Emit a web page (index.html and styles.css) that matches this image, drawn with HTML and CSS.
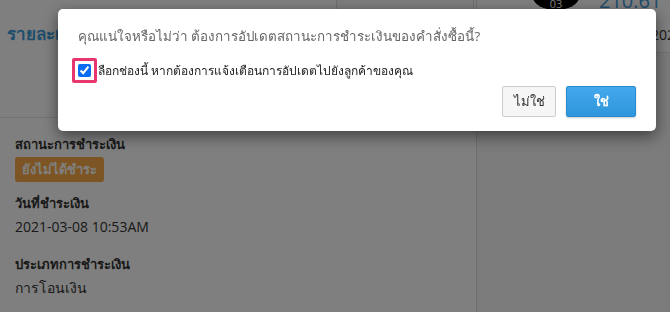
FILE: index.html
```html
<!DOCTYPE html>
<html>

<head>
  <meta charset="UTF-8">
  <title>Payment status</title>
  <link rel="stylesheet" href="styles.css">
</head>

<body>

  <div class="page">
    <div class="main">
      <div class="main-head">
        <h2 class="title">รายละเอียดการชำระเงิน</h2>
        <div class="head-btn"></div>
      </div>
      <div class="details">
        <div class="label">สถานะการชำระเงิน</div>
        <div class="badge">ยังไม่ได้ชำระ</div>
        <div class="label">วันที่ชำระเงิน</div>
        <div class="value">2021-03-08 10:53AM</div>
        <div class="label">ประเภทการชำระเงิน</div>
        <div class="value">การโอนเงิน</div>
      </div>
    </div>
    <div class="side">
      <div class="side-head">
        <div class="side-top">
          <span class="bubble">03</span>
          <span class="amount">210.61</span>
        </div>
        <div class="side-date">2021-03-08</div>
      </div>
    </div>
  </div>

  <div class="backdrop"></div>

  <div class="modal">
    <p class="question">คุณแน่ใจหรือไม่ว่า ต้องการอัปเดตสถานะการชำระเงินของคำสั่งซื้อนี้?</p>
    <label class="notify">
      <span class="check-ring"><input type="checkbox" checked></span>
      <span>ลือกช่องนี้ หากต้องการแจ้งเตือนการอัปเดตไปยังลูกค้าของคุณ</span>
    </label>
    <div class="actions">
      <button class="btn btn-no">ไม่ใช่</button>
      <button class="btn btn-yes">ใช่</button>
    </div>
  </div>

</body>

</html>
```

FILE: styles.css
```css
html,
body {
  margin: 0;
  height: 100%;
  overflow: hidden;
}

body {
  font-family: "Open Sans", "Noto Sans", sans-serif;
  color: #333;
  background: #fff;
}

.page {
  display: flex;
  height: 100%;
}

.main {
  flex: none;
  width: 476px;
  border-right: 1px solid #ddd;
}

.main-head {
  height: 117px;
  border-bottom: 1px solid #e4e4e4;
  position: relative;
}

.title {
  margin: 0;
  padding: 20px 0 0 7px;
  font-size: 17px;
  font-weight: 700;
  color: #3f9bd9;
}

.head-btn {
  position: absolute;
  left: 336px;
  top: -6px;
  width: 136px;
  height: 14px;
  border: 1px solid #ddd;
  border-radius: 4px;
  background: #fafafa;
}

.details {
  padding: 16px 15px 0;
}

.label {
  font-size: 13px;
  font-weight: 700;
  line-height: 20px;
}

.badge {
  width: fit-content;
  margin: 3px 0 11px;
  padding: 0 7px;
  height: 25px;
  line-height: 25px;
  border-radius: 3px;
  font-size: 13px;
  font-weight: 700;
  background: #faab48;
  color: #fff;
}

.value {
  margin: 4px 0 17px;
  font-size: 14px;
  line-height: 20px;
}

.side {
  flex: 1;
  min-width: 0;
  overflow: hidden;
  background: #f6f6f6;
}

.side-head {
  height: 52px;
  background: #fff;
  border-bottom: 1px solid #e4e4e4;
  padding-left: 56px;
}

.side-top {
  display: flex;
  align-items: flex-end;
  height: 10px;
}

.bubble {
  flex: none;
  width: 46px;
  height: 26px;
  margin-top: -16px;
  border-radius: 50%;
  background: #000;
  color: #fff;
  font-size: 11px;
  text-align: center;
  line-height: 40px;
}

.amount {
  margin-left: 20px;
  font-size: 20px;
  line-height: 20px;
  margin-bottom: -1px;
  color: #3f9bd9;
  white-space: nowrap;
}

.side-date {
  margin: 15px 0 0 118px;
  font-size: 14px;
  white-space: nowrap;
  color: #333;
}

.backdrop {
  position: fixed;
  inset: 0;
  background: rgba(0, 0, 0, 0.5);
}

.modal {
  position: fixed;
  left: 58px;
  top: 9px;
  width: 598px;
  height: 122px;
  box-sizing: border-box;
  padding: 17px 20px 0 20px;
  background: #fff;
  border-radius: 5px;
  box-shadow: 0 5px 15px rgba(0, 0, 0, 0.5);
}

.question {
  margin: 0;
  font-size: 13.4px;
  line-height: 20px;
  color: #666;
}

.notify {
  display: flex;
  align-items: center;
  margin: 12px 0 0 -6px;
  font-size: 12px;
  color: #222;
}

.check-ring {
  display: inline-flex;
  padding: 3px;
  border: 3px solid #e8366f;
  border-radius: 2px;
  margin-right: 1px;
}

.check-ring input {
  margin: 0;
  width: 13px;
  height: 13px;
  accent-color: #0a6cf5;
}

.actions {
  display: flex;
  justify-content: flex-end;
  gap: 10px;
  margin-top: 3px;
}

.btn {
  height: 31px;
  border-radius: 2px;
  font-family: inherit;
  font-size: 13px;
  cursor: pointer;
}

.btn-no {
  width: 54px;
  background: #f6f6f6;
  border: 1px solid #ccc;
  color: #333;
}

.btn-yes {
  width: 70px;
  background: linear-gradient(#44a8ec, #2e96dd);
  border: 1px solid #2a8ad0;
  color: #fff;
  font-weight: 700;
  box-shadow: 0 1px 2px rgba(0, 0, 0, 0.2);
}
```
